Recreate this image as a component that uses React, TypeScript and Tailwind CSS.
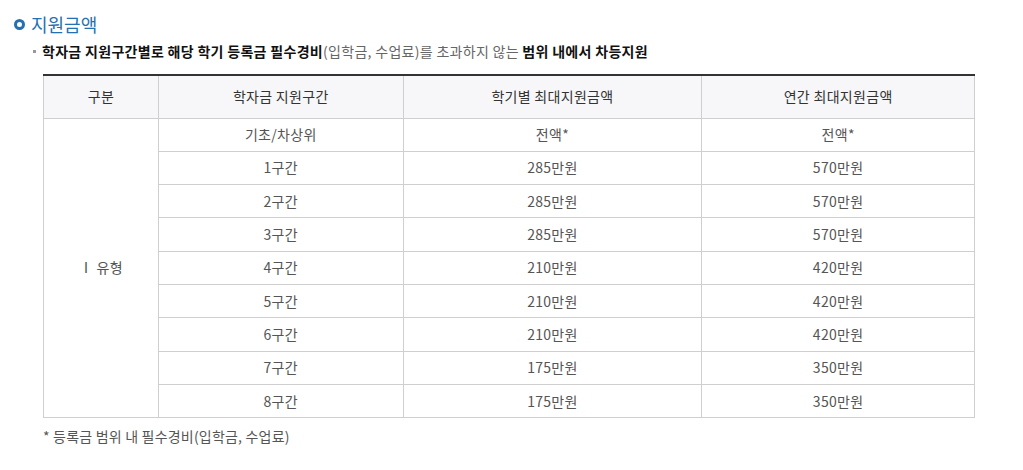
import React from "react";

type Row = {
  band: string;
  semester: string;
  annual: string;
};

const rows: Row[] = [
  { band: "기초/차상위", semester: "전액*", annual: "전액*" },
  { band: "1구간", semester: "285만원", annual: "570만원" },
  { band: "2구간", semester: "285만원", annual: "570만원" },
  { band: "3구간", semester: "285만원", annual: "570만원" },
  { band: "4구간", semester: "210만원", annual: "420만원" },
  { band: "5구간", semester: "210만원", annual: "420만원" },
  { band: "6구간", semester: "210만원", annual: "420만원" },
  { band: "7구간", semester: "175만원", annual: "350만원" },
  { band: "8구간", semester: "175만원", annual: "350만원" },
];

const font = {
  fontFamily: '"Noto Sans CJK KR", "Noto Sans", sans-serif',
};

export default function App() {
  return (
    <div className="w-[1023px] h-[470px] bg-white pt-[13px]" style={font}>
      {/* section title */}
      <div className="flex items-center pl-[14px] h-[22px]">
        <span className="w-[11px] h-[11px] rounded-full border-[3px] border-[#2470b3] mr-[6px]" />
        <h3 className="text-[18px] leading-none text-[#2470b3]">지원금액</h3>
      </div>

      <div className="flex items-center pl-[33px] mt-[6px] h-[20px] text-[14px] tracking-[0.3px]">
        <span className="w-[3px] h-[3px] bg-[#999] mr-[6px]" />
        <p className="text-[#666]">
          <b className="text-[#111]">학자금 지원구간별로 해당 학기 등록금 필수경비</b>
          (입학금, 수업료)를 초과하지 않는{" "}
          <b className="text-[#111]">범위 내에서 차등지원</b>
        </p>
      </div>

      <div className="pl-[43px] mt-[13px]">
        <table className="w-[932px] border-collapse border-t-2 border-t-[#333] text-[14px] tracking-[0.3px] text-[#555] text-center">
          <colgroup>
            <col className="w-[115px]" />
            <col className="w-[245px]" />
            <col className="w-[299px]" />
            <col className="w-[273px]" />
          </colgroup>
          <thead>
            <tr className="bg-[#f7f7f9] text-[#333] h-[43px]">
              <th className="font-normal border border-[#cfcfcf] border-t-0">구분</th>
              <th className="font-normal border border-[#cfcfcf] border-t-0">학자금 지원구간</th>
              <th className="font-normal border border-[#cfcfcf] border-t-0">학기별 최대지원금액</th>
              <th className="font-normal border border-[#cfcfcf] border-t-0">연간 최대지원금액</th>
            </tr>
          </thead>
          <tbody>
            {rows.map((r, i) => (
              <tr key={r.band} className="h-[33.3px]">
                {i === 0 && (
                  <td rowSpan={rows.length} className="border border-[#cfcfcf]">
                    Ⅰ 유형
                  </td>
                )}
                <td className="border border-[#cfcfcf]">{r.band}</td>
                <td className="border border-[#cfcfcf]">{r.semester}</td>
                <td className="border border-[#cfcfcf]">{r.annual}</td>
              </tr>
            ))}
          </tbody>
        </table>
      </div>

      <p className="pl-[43px] mt-[8px] text-[14px] tracking-[0.2px] text-[#555]">* 등록금 범위 내 필수경비(입학금, 수업료)</p>
    </div>
  );
}
